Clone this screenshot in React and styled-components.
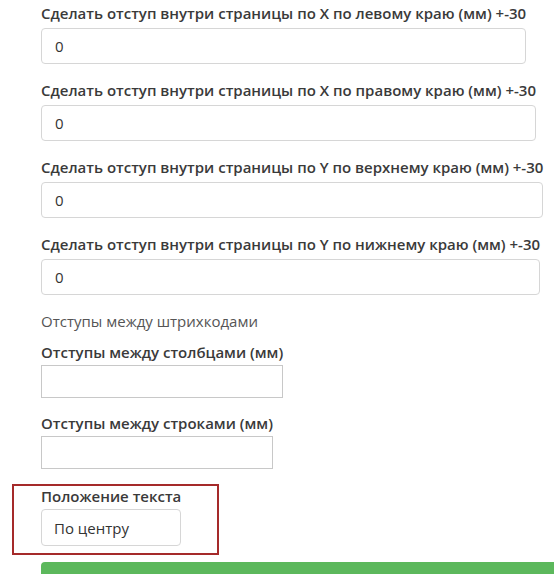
import React from "react";
import styled, { createGlobalStyle } from "styled-components";

const GlobalStyle = createGlobalStyle`
	body {
		margin: 0;
		background: #fff;
		overflow: hidden;
		font-family: "Open Sans", "Noto Sans", sans-serif;
		color: #333;
	}
`;

export default function App() {
	const offsets = [
		"Сделать отступ внутри страницы по X по левому краю (мм) +-30",
		"Сделать отступ внутри страницы по X по правому краю (мм) +-30",
		"Сделать отступ внутри страницы по Y по верхнему краю (мм) +-30",
		"Сделать отступ внутри страницы по Y по нижнему краю (мм) +-30",
	];

	return (
		<>
			<GlobalStyle />
			<Form>
				{offsets.map((text) => (
					<Group key={text}>
						<Label>{text}</Label>
						<Input defaultValue="0" />
					</Group>
				))}
				<Subheading>Отступы между штрихкодами</Subheading>
				<Group $gap="15px">
					<Label $tight>Отступы между столбцами (мм)</Label>
					<PlainInput />
				</Group>
				<Group $gap="15px">
					<Label $tight>Отступы между строками (мм)</Label>
					<PlainInput />
				</Group>
				<Highlight>
					<Group $gap="0">
						<Label $tight>Положение текста</Label>
						<Select defaultValue="center">
							<option value="center">По центру</option>
							<option value="left">Слева</option>
							<option value="right">Справа</option>
						</Select>
					</Group>
				</Highlight>
				<SaveButton>Сохранить</SaveButton>
			</Form>
		</>
	);
}

const Form = styled.div`
	display: flex;
	flex-direction: column;
	align-items: flex-start;
	padding: 3px 0 0 41px;
`;

const Group = styled.div`
	display: flex;
	flex-direction: column;
	margin-bottom: ${(p) => p.$gap || "16px"};
`;

const Label = styled.label`
	font-size: 15px;
	line-height: 20px;
	font-weight: 600;
	color: #3a3a3a;
	white-space: nowrap;
	margin-bottom: ${(p) => (p.$tight ? "3px" : "5px")};
`;

const Subheading = styled.div`
	font-size: 15px;
	line-height: 20px;
	color: #555;
	margin-bottom: 11px;
`;

const Input = styled.input`
	box-sizing: border-box;
	width: 100%;
	height: 36px;
	padding: 0 13px;
	border: 1px solid #d6d6d6;
	border-radius: 4px;
	font-family: inherit;
	font-size: 15px;
	color: #333;
	outline: none;
`;

const PlainInput = styled.input`
	box-sizing: border-box;
	width: 100%;
	height: 33px;
	border: 1px solid #c8c8c8;
	border-radius: 0;
	outline: none;
`;

const Select = styled.select`
	box-sizing: border-box;
	width: 100%;
	height: 37px;
	padding: 0 12px;
	border: 1px solid #d6d6d6;
	border-radius: 4px;
	background: #fff;
	font-family: inherit;
	font-size: 15px;
	color: #333;
	appearance: none;
	outline: none;
`;

const Highlight = styled.div`
	margin: 0 0 7px -29px;
	padding: 0 36px 7px 27px;
	border: 2px solid #a52a2a;
`;

const SaveButton = styled.button`
	display: flex;
	align-items: flex-end;
	justify-content: center;
	box-sizing: border-box;
	width: 540px;
	height: 80px;
	padding: 0 0 20px;
	border: none;
	border-radius: 4px;
	background: #5cb85c;
	color: #fff;
	font-family: inherit;
	font-size: 15px;
	line-height: 20px;
`;
